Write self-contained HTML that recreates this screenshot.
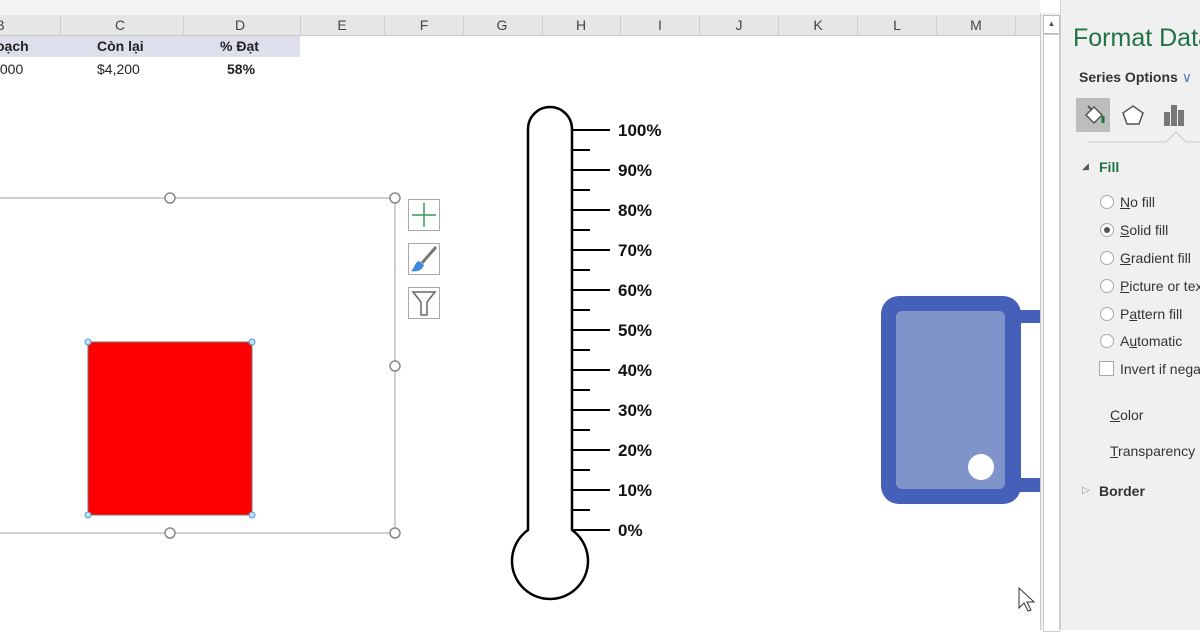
<!DOCTYPE html>
<html><head><meta charset="utf-8"><style>
body{margin:0;width:1200px;height:630px;overflow:hidden;background:#fff;font-family:"Liberation Sans",sans-serif;position:relative}
.a{position:absolute}
.hdr{top:15px;height:20px;background:#e6e6e6;border-bottom:1px solid #c8c8c8;left:0;width:1040px}
.col{position:absolute;top:15px;height:20px;line-height:20px;font-size:14px;color:#444;text-align:center}
.vl{position:absolute;top:15px;height:20px;width:1px;background:#cfcfcf}
.p{position:absolute;font-size:14px;color:#333}
.u{text-decoration:underline}
.r{position:absolute;left:1100px;width:12px;height:12px;border:1px solid #aaa;border-radius:50%;background:#fff}
</style></head><body>
<div class="a" style="left:0;top:0;width:1040px;height:15px;background:#f3f3f3;border-bottom:1px solid #ddd"></div>
<div class="a hdr"></div>
<div class="vl" style="left:60px"></div><div class="vl" style="left:183px"></div><div class="vl" style="left:300px"></div>
<div class="vl" style="left:384px"></div><div class="vl" style="left:463px"></div><div class="vl" style="left:542px"></div><div class="vl" style="left:620px"></div><div class="vl" style="left:699px"></div><div class="vl" style="left:778px"></div><div class="vl" style="left:857px"></div><div class="vl" style="left:936px"></div><div class="vl" style="left:1015px"></div>
<div class="col" style="left:-10px;width:20px">B</div>
<div class="col" style="left:110px;width:20px">C</div>
<div class="col" style="left:230px;width:20px">D</div>
<div class="col" style="left:332px;width:20px">E</div>
<div class="col" style="left:414px;width:20px">F</div>
<div class="col" style="left:492px;width:20px">G</div>
<div class="col" style="left:571px;width:20px">H</div>
<div class="col" style="left:650px;width:20px">I</div>
<div class="col" style="left:729px;width:20px">J</div>
<div class="col" style="left:808px;width:20px">K</div>
<div class="col" style="left:887px;width:20px">L</div>
<div class="col" style="left:966px;width:20px">M</div>
<div class="a" style="left:0;top:36px;width:300px;height:21px;background:#dde0ea"></div>
<div class="a" style="left:-4px;top:38px;font-size:14px;font-weight:bold;color:#222">oạch</div>
<div class="a" style="left:97px;top:38px;font-size:14px;font-weight:bold;color:#222">Còn lại</div>
<div class="a" style="left:220px;top:38px;font-size:14px;font-weight:bold;color:#222">% Đạt</div>
<div class="a" style="left:-4px;top:61px;font-size:14px;color:#222">,000</div>
<div class="a" style="left:97px;top:61px;font-size:14px;color:#222">$4,200</div>
<div class="a" style="left:227px;top:61px;font-size:14px;font-weight:bold;color:#222">58%</div>

<svg class="a" style="left:0;top:0" width="1040" height="630">
<rect x="-5" y="198" width="400" height="335" fill="none" stroke="#a0a0a0"/>
<g fill="#fff" stroke="#888" stroke-width="1.5">
<circle cx="170" cy="198" r="5"/><circle cx="395" cy="198" r="5"/><circle cx="395" cy="366" r="5"/><circle cx="170" cy="533" r="5"/><circle cx="395" cy="533" r="5"/></g>
<rect x="88" y="342" width="164" height="173" fill="#ff0000" stroke="#777" stroke-width="1"/>
<g fill="#bfe0f8" stroke="#5b9bd5"><circle cx="88" cy="342" r="3"/><circle cx="252" cy="342" r="3"/><circle cx="88" cy="515" r="3"/><circle cx="252" cy="515" r="3"/></g>
<g fill="#fff" stroke="#aaa"><rect x="408.5" y="199.5" width="31" height="31"/><rect x="408.5" y="243.5" width="31" height="31"/><rect x="408.5" y="287.5" width="31" height="31"/></g>
<path d="M424 203v24M412 215h24" stroke="#3a9a5a" stroke-width="1.5"/>
<path d="M436 247l-14 16" stroke="#777" stroke-width="3"/><path d="M419 261c-5 2-4 7-8 10 5 1 11 0 13-6z" fill="#3c8ad8"/>
<path d="M413 292h22l-8 10v13h-6v-13z" fill="none" stroke="#666" stroke-width="1.5"/>
<path d="M528 530V129a22 22 0 0 1 44 0V530a38 38 0 1 1-44 0z" fill="#fff" stroke="#000" stroke-width="2.5"/>
<g stroke="#000" stroke-width="2">
<path d="M572 130h38M572 170h38M572 210h38M572 250h38M572 290h38M572 330h38M572 370h38M572 410h38M572 450h38M572 490h38M572 530h38"/>
<path d="M572 150h18M572 190h18M572 230h18M572 270h18M572 310h18M572 350h18M572 390h18M572 430h18M572 470h18M572 510h18"/>
</g>
<g font-family="Liberation Sans" font-weight="bold" font-size="17" fill="#111">
<text x="618" y="136">100%</text><text x="618" y="176">90%</text><text x="618" y="216">80%</text><text x="618" y="256">70%</text><text x="618" y="296">60%</text><text x="618" y="336">50%</text><text x="618" y="376">40%</text><text x="618" y="416">30%</text><text x="618" y="456">20%</text><text x="618" y="496">10%</text><text x="618" y="536">0%</text></g>
<rect x="1010" y="310" width="32" height="13" fill="#4460b8"/><rect x="1010" y="478" width="32" height="14" fill="#4460b8"/>
<rect x="881" y="296" width="140" height="208" rx="18" fill="#4460b8"/>
<rect x="896" y="311" width="109" height="178" rx="6" fill="#8094cc"/>
<circle cx="981" cy="467" r="13" fill="#fff"/>
<path d="M1019 588v20l5-5 4 8 3-1-4-8h7z" fill="#fff" stroke="#333"/>
</svg>
<div class="a" style="left:1040px;top:13px;width:20px;height:617px;background:#f0f0f0;border-left:1px solid #ccc"></div>
<div class="a" style="left:1043px;top:15px;width:15px;height:17px;background:#fff;border:1px solid #bbb;font-size:8px;text-align:center;line-height:16px;color:#555">▲</div>
<div class="a" style="left:1043px;top:34px;width:15px;height:596px;background:#fff;border:1px solid #ccc"></div>
<div class="a" style="left:1060px;top:0;width:140px;height:630px;background:#f0f0f0;border-left:1px solid #d0d0d0"></div>
<div class="a" style="left:1073px;top:24px;font-size:25px;color:#217346;white-space:nowrap">Format Data</div>
<div class="a" style="left:1079px;top:69px;font-size:14px;font-weight:bold;color:#333;white-space:nowrap">Series Options <span style="color:#4a7fc0;font-weight:normal">&#8744;</span></div>
<div class="a" style="left:1076px;top:98px;width:34px;height:34px;background:#bdbdbd"></div>
<svg class="a" style="left:1076px;top:98px" width="124" height="60">
<path d="M10 17l8-8 8 8-8 8z" fill="#fff" stroke="#555" stroke-width="1.5"/><path d="M12 8l4 4" stroke="#555" stroke-width="2"/><path d="M27 18v7" stroke="#217346" stroke-width="3"/>
<path d="M57 8l10 7-4 11h-12l-4-11z" fill="#fff" stroke="#555" stroke-width="1.5"/>
<rect x="88" y="14" width="6" height="14" fill="#777"/><rect x="95" y="7" width="6" height="21" fill="#777"/><rect x="102" y="12" width="6" height="16" fill="#777"/>
<path d="M12 44h78l10-10 10 10h20" fill="none" stroke="#ccc"/>
</svg>
<div class="a" style="left:1082px;top:161px;font-size:9px;color:#555">◢</div>
<div class="a" style="left:1099px;top:159px;font-size:14px;font-weight:bold;color:#217346">Fill</div>
<div class="r" style="top:195px"></div><div class="p" style="left:1120px;top:194px"><span class="u">N</span>o fill</div>
<div class="r" style="top:223px"></div><div class="a" style="left:1104px;top:227px;width:6px;height:6px;border-radius:50%;background:#555"></div><div class="p" style="left:1120px;top:222px"><span class="u">S</span>olid fill</div>
<div class="r" style="top:251px"></div><div class="p" style="left:1120px;top:250px;white-space:nowrap"><span class="u">G</span>radient fill</div>
<div class="r" style="top:279px"></div><div class="p" style="left:1120px;top:278px;white-space:nowrap"><span class="u">P</span>icture or text</div>
<div class="r" style="top:307px"></div><div class="p" style="left:1120px;top:306px;white-space:nowrap">P<span class="u">a</span>ttern fill</div>
<div class="r" style="top:334px"></div><div class="p" style="left:1120px;top:333px">A<span class="u">u</span>tomatic</div>
<div class="a" style="left:1099px;top:361px;width:13px;height:13px;border:1px solid #aaa;background:#fff"></div><div class="p" style="left:1120px;top:361px;white-space:nowrap">Invert if negative</div>
<div class="p" style="left:1110px;top:407px"><span class="u">C</span>olor</div>
<div class="p" style="left:1110px;top:443px"><span class="u">T</span>ransparency</div>
<div class="a" style="left:1082px;top:485px;font-size:10px;color:#999">▷</div>
<div class="a" style="left:1099px;top:483px;font-size:14px;font-weight:bold;color:#333">Border</div>
</body></html>
